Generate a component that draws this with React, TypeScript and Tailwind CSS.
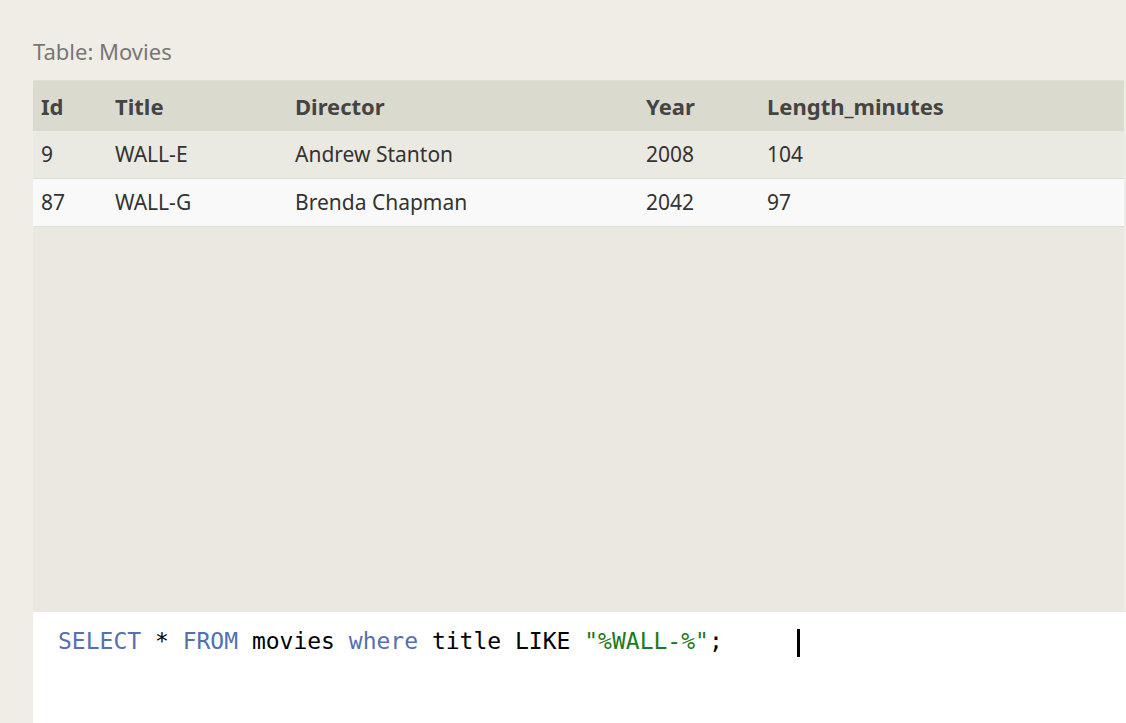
const movies = [
  { id: 9, title: 'WALL-E', director: 'Andrew Stanton', year: 2008, length: 104 },
  { id: 87, title: 'WALL-G', director: 'Brenda Chapman', year: 2042, length: 97 },
];

const cols = 'grid grid-cols-[82px_180px_351px_121px_1fr]';

const App = () => {
  return (
    <div className="min-h-screen bg-[#f0ede6] pl-[33px] pt-[36px] font-['Noto_Sans',sans-serif]">
      <div className="text-[22px] leading-[30px] text-[#777] mb-[14px]">Table: Movies</div>
      <div className="mr-[2px] bg-[#eae8e1] border-t border-[#e2e1d8] h-[532px]">
        <div className={`${cols} h-[50px] items-center bg-[#dbdace] text-[22px] font-bold text-[#444]`}>
          <div className="pl-[8px]">Id</div>
          <div>Title</div>
          <div>Director</div>
          <div>Year</div>
          <div>Length_minutes</div>
        </div>
        {movies.map((m, i) => (
          <div
            key={m.id}
            className={`${cols} h-[48px] items-center text-[21px] text-[#333] border-b border-[#dedede] ${
              i % 2 === 0 ? 'bg-[#eae9e2]' : 'bg-[#f9f9f9]'
            }`}
          >
            <div className="pl-[8px]">{m.id}</div>
            <div>{m.title}</div>
            <div>{m.director}</div>
            <div>{m.year}</div>
            <div>{m.length}</div>
          </div>
        ))}
      </div>
      <div className="bg-white h-[111px] pl-[25px] pt-[14px] font-['DejaVu_Sans_Mono',monospace] text-[23px] leading-[30px] text-black">
        <span className="text-[#5570b0]">SELECT</span> * <span className="text-[#5570b0]">FROM</span> movies{' '}
        <span className="text-[#5570b0]">where</span> title LIKE <span className="text-[#1b7a1b]">"%WALL-%"</span>;
        <span className="inline-block align-middle ml-[74px] w-[3px] h-[28px] bg-black" />
      </div>
    </div>
  );
};

export default App;
